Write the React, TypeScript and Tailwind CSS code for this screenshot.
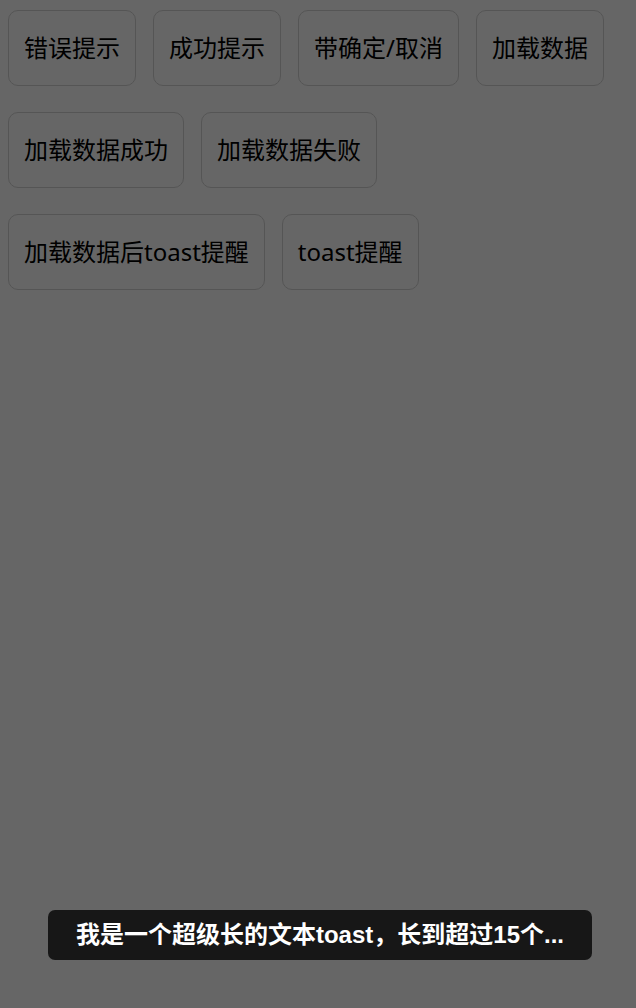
import React from 'react';

const rows: string[][] = [
  ['错误提示', '成功提示', '带确定/取消', '加载数据'],
  ['加载数据成功', '加载数据失败'],
  ['加载数据后toast提醒', 'toast提醒'],
];

const DemoButton: React.FC<{ label: string }> = ({ label }) => (
  <button
    className="h-[76px] px-[15px] rounded-[10px] border border-[#d4d4d4] bg-white text-[24px] leading-none text-black whitespace-nowrap"
    style={{ fontFamily: '"Noto Sans", "Noto Sans CJK SC", sans-serif' }}
  >
    {label}
  </button>
);

const App: React.FC = () => {
  return (
    <div
      className="relative w-[636px] h-[1008px] overflow-hidden bg-white"
      style={{ fontFamily: '"Liberation Sans", "Noto Sans CJK SC", sans-serif' }}
    >
      <div className="flex flex-col gap-[26px] pt-[10px] pl-[8px]">
        {rows.map((row, i) => (
          <div key={i} className="flex gap-[17px]">
            {row.map((label) => (
              <DemoButton key={label} label={label} />
            ))}
          </div>
        ))}
      </div>

      {/* mask */}
      <div className="absolute inset-0 bg-black/60" />

      {/* toast */}
      <div className="absolute left-[48px] bottom-[48px] w-[544px] h-[50px] rounded-[7px] bg-[#171717] flex items-center justify-center px-[24px]">
        <span className="text-white text-[24px] font-semibold whitespace-nowrap">
          我是一个超级长的文本toast，长到超过15个...
        </span>
      </div>
    </div>
  );
};

export default App;
